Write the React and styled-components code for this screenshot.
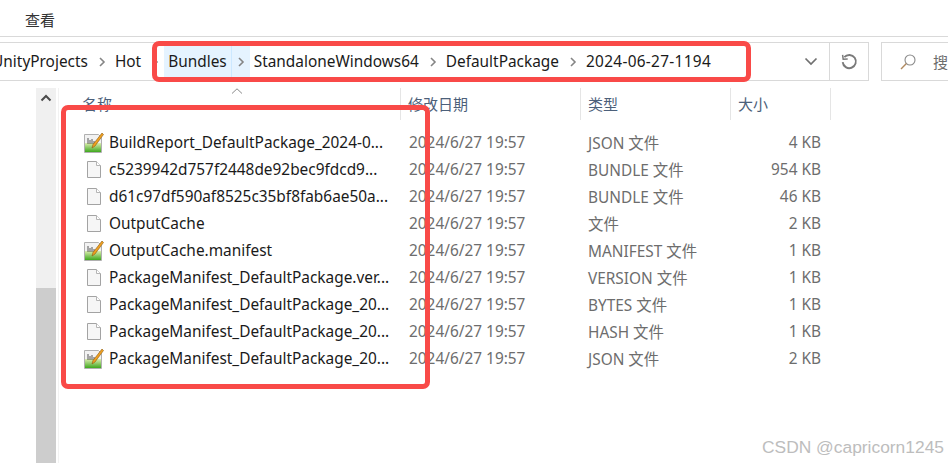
import styled, { createGlobalStyle } from "styled-components"

const files = [
  { name: "BuildReport_DefaultPackage_2024-0...", type: "JSON 文件", size: "4 KB", manifest: true },
  { name: "c5239942d757f2448de92bec9fdcd9...", type: "BUNDLE 文件", size: "954 KB" },
  { name: "d61c97df590af8525c35bf8fab6ae50a...", type: "BUNDLE 文件", size: "46 KB" },
  { name: "OutputCache", type: "文件", size: "2 KB" },
  { name: "OutputCache.manifest", type: "MANIFEST 文件", size: "1 KB", manifest: true },
  { name: "PackageManifest_DefaultPackage.ver...", type: "VERSION 文件", size: "1 KB" },
  { name: "PackageManifest_DefaultPackage_20...", type: "BYTES 文件", size: "1 KB" },
  { name: "PackageManifest_DefaultPackage_20...", type: "HASH 文件", size: "1 KB" },
  { name: "PackageManifest_DefaultPackage_20...", type: "JSON 文件", size: "2 KB", manifest: true },
]

const crumbs = ["UnityProjects", "Hot", "Bundles", "StandaloneWindows64", "DefaultPackage", "2024-06-27-1194"]

function Chevron() {
  return (
    <svg width="8" height="10" viewBox="0 0 8 10" fill="none">
      <path d="M2 1l4 4-4 4" stroke="#858585" strokeWidth="1.6" />
    </svg>
  )
}

function PlainIcon() {
  return (
    <svg width="16" height="19" viewBox="0 0 16 19" fill="none">
      <path d="M1.5 1.5h9l4 4v12h-13z" fill="#f6f6f6" stroke="#a3a3a3" />
      <path d="M10.5 1.5v4h4" fill="#fff" stroke="#b5b5b5" />
    </svg>
  )
}

function ManifestIcon() {
  return (
    <svg width="20" height="21" viewBox="0 0 20 21" fill="none">
      <defs>
        <linearGradient id="manifestGreen" x1="0" y1="0" x2="0" y2="1">
          <stop offset="0" stopColor="#dcedb0" />
          <stop offset="1" stopColor="#3fa81e" />
        </linearGradient>
      </defs>
      <path d="M.5 2.5h14l3 3v15H.5z" fill="#f2f2f2" stroke="#b0b0b0" />
      <rect x="1" y="11" width="16" height="9" fill="url(#manifestGreen)" />
      <path d="M4 6v6M6 8v4M8 7v5M10 9v3M12 10v2" stroke="#444" strokeWidth=".9" />
      <path d="M18 1l1.5 1.5L11 14l-3 2 1-3.5z" fill="#f0a020" stroke="#8a5a10" strokeWidth=".6" />
    </svg>
  )
}

function App() {
  return (
    <Page>
      <GlobalStyle />
      <Ribbon>
        <RibbonTab>查看</RibbonTab>
      </Ribbon>

      <AddressRow>
        <AddressBar>
          <Crumbs>
            {crumbs.map((c, i) => (
              <Crumb key={c}>
                <CrumbText $hot={c === "Bundles"} $date={i === crumbs.length - 1}>{c}</CrumbText>
                {i < crumbs.length - 1 && (
                  <CrumbArrow $hot={c === "Bundles"}>
                    <Chevron />
                  </CrumbArrow>
                )}
              </Crumb>
            ))}
          </Crumbs>
          <DropButton>
            <svg width="14" height="9" viewBox="0 0 14 9" fill="none">
              <path d="M1.5 1.5L7 7l5.5-5.5" stroke="#707070" strokeWidth="1.7" />
            </svg>
          </DropButton>
        </AddressBar>
        <RefreshButton>
          <svg width="18" height="18" viewBox="0 0 18 18" fill="none">
            <path d="M4.3 4.2a6.6 6.6 0 1 1-1.6 5" stroke="#7a7a7a" strokeWidth="1.9" />
            <path d="M2.6 1.8l.6 4.5 4.5-.4" stroke="#7a7a7a" strokeWidth="1.5" />
          </svg>
        </RefreshButton>
        <SearchBox>
          <svg width="18" height="18" viewBox="0 0 18 18" fill="none">
            <circle cx="11" cy="7" r="5" stroke="#8a8a8a" strokeWidth="1.1" />
            <path d="M7.4 10.6L2 16" stroke="#b08a60" strokeWidth="1.4" />
          </svg>
          <SearchText>搜</SearchText>
        </SearchBox>
      </AddressRow>

      <Body>
        <ScrollBar>
          <ScrollUp>
            <svg width="12" height="8" viewBox="0 0 12 8" fill="none">
              <path d="M1.5 6.5L6 2l4.5 4.5" stroke="#4a4a4a" strokeWidth="2" />
            </svg>
          </ScrollUp>
          <ScrollThumb />
        </ScrollBar>

        <List>
          <HeaderRow>
            <HeaderCell>
              名称
              <SortMark>
                <svg width="12" height="6" viewBox="0 0 12 6" fill="none">
                  <path d="M1 5.5L6 .8l5 4.7" stroke="#8a8a8a" />
                </svg>
              </SortMark>
            </HeaderCell>
            <HeaderCell>修改日期</HeaderCell>
            <HeaderCell>类型</HeaderCell>
            <HeaderCell>大小</HeaderCell>
          </HeaderRow>

          <Rows>
            {files.map((f, i) => (
              <Row key={i}>
                <NameCell>
                  <IconSlot>{f.manifest ? <ManifestIcon /> : <PlainIcon />}</IconSlot>
                  {f.name}
                </NameCell>
                <MetaCell>2024/6/27 19:57</MetaCell>
                <MetaCell>{f.type}</MetaCell>
                <SizeCell>{f.size}</SizeCell>
              </Row>
            ))}
          </Rows>
        </List>
      </Body>

      <BreadcrumbMark />
      <FilesMark />
      <Watermark>CSDN @capricorn1245</Watermark>
    </Page>
  )
}

export default App

const GlobalStyle = createGlobalStyle`
  html, body {
    margin: 0;
    padding: 0;
    background: #fff;
  }
`

const Page = styled.div`
  position: relative;
  width: 948px;
  height: 463px;
  overflow: hidden;
  background: #fff;
  font-family: "Noto Sans", "Noto Sans CJK SC", sans-serif;
  font-size: 15.4px;
  color: #1a1a1a;
`

const Ribbon = styled.div`
  height: 37px;
  box-sizing: border-box;
  padding-left: 25px;
  display: flex;
  align-items: center;
  border-bottom: 1px solid #d9d9d9;
`

const RibbonTab = styled.span`
  font-size: 15px;
  color: #333;
  padding-top: 3px;
`

const AddressRow = styled.div`
  display: flex;
  margin-top: 5px;
  height: 39px;
`

const AddressBar = styled.div`
  width: 830px;
  box-sizing: border-box;
  display: flex;
  border: 1px solid #d9d9d9;
  border-left: 0;
  min-width: 0;
`

const Crumbs = styled.div`
  width: 716px;
  flex: none;
  display: flex;
  justify-content: flex-end;
  overflow: hidden;
`

const Crumb = styled.div`
  display: flex;
  flex: none;
  align-items: stretch;
`

const CrumbText = styled.span`
  display: flex;
  align-items: center;
  padding: 0 4px;
  background: ${(p) => (p.$hot ? "#e5f3ff" : "transparent")};
  border-right: 1px solid ${(p) => (p.$hot ? "#cce8ff" : "transparent")};
  letter-spacing: ${(p) => (p.$date ? "0.3px" : "0")};
`

const CrumbArrow = styled.span`
  width: 18px;
  display: flex;
  align-items: center;
  justify-content: center;
  background: ${(p) => (p.$hot ? "#e5f3ff" : "transparent")};
`

const DropButton = styled.div`
  margin-left: auto;
  width: 36px;
  display: flex;
  align-items: center;
  justify-content: center;
`

const RefreshButton = styled.div`
  width: 39px;
  box-sizing: border-box;
  display: flex;
  align-items: center;
  justify-content: center;
  border: 1px solid #d9d9d9;
  border-left: 0;
`

const SearchBox = styled.div`
  margin-left: 12px;
  flex: 1;
  box-sizing: border-box;
  display: flex;
  align-items: center;
  padding-left: 17px;
  border: 1px solid #d9d9d9;
  border-right: 0;
`

const SearchText = styled.span`
  margin-left: 16px;
  color: #6d6d6d;
  font-size: 15px;
`

const Body = styled.div`
  display: flex;
  margin-top: 7px;
  padding-left: 36px;
  height: 375px;
`

const ScrollBar = styled.div`
  width: 20px;
  display: flex;
  flex-direction: column;
  justify-content: space-between;
  background: #f0f0f0;
`

const ScrollUp = styled.div`
  height: 20px;
  display: flex;
  align-items: center;
  justify-content: center;
`

const ScrollThumb = styled.div`
  height: 175px;
  background: #cdcdcd;
`

const List = styled.div`
  margin-left: 2px;
  flex: 1;
  border-left: 1px solid #f2f2f2;
`

const HeaderRow = styled.div`
  height: 32px;
  display: grid;
  grid-template-columns: 342px 180px 150px 100px;
`

const HeaderCell = styled.div`
  position: relative;
  box-sizing: border-box;
  display: flex;
  align-items: center;
  padding: 0 7px 2px;
  font-size: 15px;
  color: #4c607a;
  border-right: 1px solid #e5e5e5;
  &:first-child {
    padding-left: 23px;
  }
`

const SortMark = styled.span`
  position: absolute;
  left: 172px;
  top: 0;
  line-height: 0;
`

const Rows = styled.div`
  padding-top: 9px;
`

const Row = styled.div`
  height: 27px;
  display: grid;
  grid-template-columns: 342px 179px 150px 100px;
  align-items: center;
`

const NameCell = styled.div`
  display: flex;
  align-items: center;
  padding-left: 22px;
  white-space: nowrap;
`

const IconSlot = styled.span`
  width: 28px;
  padding-right: 3px;
  box-sizing: border-box;
  display: flex;
  justify-content: center;
  flex: none;
`

const MetaCell = styled.div`
  padding-left: 8px;
  color: #6d6d6d;
  white-space: nowrap;
`

const SizeCell = styled.div`
  padding-right: 9px;
  text-align: right;
  color: #6d6d6d;
`

const Mark = styled.div`
  position: absolute;
  box-sizing: border-box;
  border: 5px solid #f94a48;
  border-radius: 7px;
  pointer-events: none;
`

const BreadcrumbMark = styled(Mark)`
  left: 152px;
  top: 41px;
  width: 599px;
  height: 41px;
`

const FilesMark = styled(Mark)`
  left: 61px;
  top: 105px;
  width: 369px;
  height: 284px;
`

const Watermark = styled.div`
  position: absolute;
  left: 762px;
  top: 437px;
  font-family: "Liberation Sans", sans-serif;
  font-size: 17.4px;
  color: #bdbdbd;
  white-space: nowrap;
`
